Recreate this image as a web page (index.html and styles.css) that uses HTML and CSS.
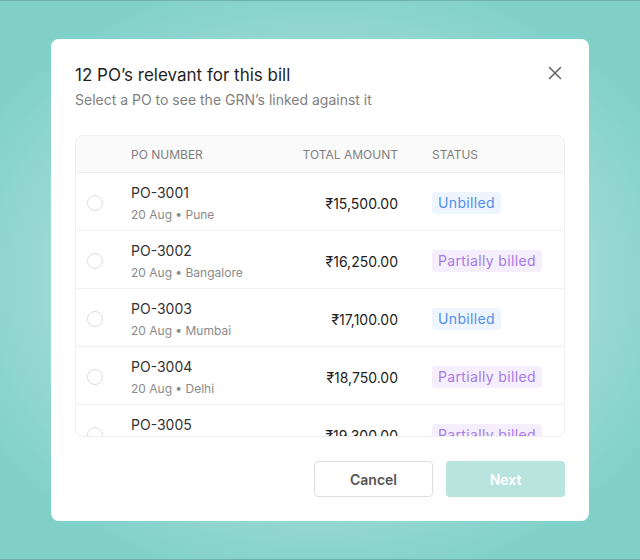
FILE: index.html
```html
<!DOCTYPE html>
<html>
<head>
<meta charset="utf-8">
<link rel="stylesheet" href="styles.css">
</head>
<body>
<div class="backdrop">
  <div class="modal">
    <div class="head">
      <div>
        <div class="title">12 PO’s relevant for this bill</div>
        <div class="subtitle">Select a PO to see the GRN’s linked against it</div>
      </div>
      <svg class="close" width="14" height="14" viewBox="0 0 14 14"><path d="M1.5 1.5 L12.5 12.5 M12.5 1.5 L1.5 12.5" stroke="#666" stroke-width="1.6" stroke-linecap="round" fill="none"/></svg>
    </div>
    <div class="card">
      <div class="row header">
        <div></div>
        <div>PO NUMBER</div>
        <div class="amt">TOTAL AMOUNT</div>
        <div></div>
        <div>STATUS</div>
      </div>
      <div class="row">
        <div class="radio-cell"><span class="radio"></span></div>
        <div class="po"><div class="num">PO-3001</div><div class="meta">20 Aug • Pune</div></div>
        <div class="amt val">₹15,500.00</div>
        <div></div>
        <div><span class="badge blue">Unbilled</span></div>
      </div>
      <div class="row">
        <div class="radio-cell"><span class="radio"></span></div>
        <div class="po"><div class="num">PO-3002</div><div class="meta">20 Aug • Bangalore</div></div>
        <div class="amt val">₹16,250.00</div>
        <div></div>
        <div><span class="badge purple">Partially billed</span></div>
      </div>
      <div class="row">
        <div class="radio-cell"><span class="radio"></span></div>
        <div class="po"><div class="num">PO-3003</div><div class="meta">20 Aug • Mumbai</div></div>
        <div class="amt val">₹17,100.00</div>
        <div></div>
        <div><span class="badge blue">Unbilled</span></div>
      </div>
      <div class="row">
        <div class="radio-cell"><span class="radio"></span></div>
        <div class="po"><div class="num">PO-3004</div><div class="meta">20 Aug • Delhi</div></div>
        <div class="amt val">₹18,750.00</div>
        <div></div>
        <div><span class="badge purple">Partially billed</span></div>
      </div>
      <div class="row">
        <div class="radio-cell"><span class="radio"></span></div>
        <div class="po"><div class="num">PO-3005</div><div class="meta">20 Aug • Chennai</div></div>
        <div class="amt val">₹19,300.00</div>
        <div></div>
        <div><span class="badge purple">Partially billed</span></div>
      </div>
    </div>
    <div class="footer">
      <button class="btn cancel">Cancel</button>
      <button class="btn next">Next</button>
    </div>
  </div>
</div>
</body>
</html>
```
FILE: styles.css
```css
* { box-sizing: border-box; }
html, body { margin: 0; padding: 0; }
body {
  font-family: Inter, "Noto Sans", sans-serif;
  width: 640px;
  height: 560px;
  overflow: hidden;
}
.backdrop {
  width: 640px;
  height: 560px;
  border-top: 1px solid #6eb2ac;
  border-bottom: 1px solid #6eb2ac;
  background: radial-gradient(ellipse 60% 55% at 50% 50%, #c4ece7 0%, #a6dfd9 55%, #82d1c9 100%);
  padding-top: 38px;
}
.modal {
  width: 538px;
  height: 482px;
  margin: 0 auto;
  background: #fff;
  border-radius: 8px;
  padding: 24px;
  display: flex;
  flex-direction: column;
}
.head {
  display: flex;
  justify-content: space-between;
  align-items: flex-start;
}
.title {
  font-size: 17px;
  line-height: 24px;
  color: #1f1f1f;
}
.subtitle {
  margin-top: 3px;
  font-size: 14px;
  line-height: 20px;
  color: #7f7f7f;
}
.close {
  margin-top: 3px;
  margin-right: 3px;
}
.card {
  margin-top: 25px;
  height: 302px;
  border: 1px solid #f0f0f0;
  border-radius: 8px;
  overflow: hidden;
}
.row {
  display: grid;
  grid-template-columns: 55px 147px 120px 34px 1fr;
  align-items: center;
  height: 58px;
  padding-top: 3px;
  border-bottom: 1px solid #f0f0f0;
}
.row.header {
  height: 37px;
  padding-top: 0;
  background: #fafafa;
  font-size: 12px;
  color: #808080;
}
.amt { text-align: right; }
.radio-cell { padding-left: 11px; display: flex; }
.radio {
  width: 16px;
  height: 16px;
  border: 1px solid #dcdcdc;
  border-radius: 50%;
  display: block;
}
.po { display: flex; flex-direction: column; gap: 3px; }
.num { font-size: 14px; line-height: 20px; color: #333; }
.meta { font-size: 12px; line-height: 18px; color: #8a8a8a; }
.val { font-size: 14px; color: #222; }
.badge {
  display: inline-block;
  height: 22px;
  line-height: 22px;
  padding: 0 6px;
  border-radius: 4px;
  font-size: 14px;
  letter-spacing: 0.35px;
}
.badge.blue { background: #eef5fe; color: #5190ea; }
.badge.purple { background: #f5effd; color: #a57be8; }
.footer {
  margin-top: 24px;
  display: flex;
  justify-content: flex-end;
  gap: 13px;
}
.btn {
  width: 119px;
  height: 36px;
  border-radius: 4px;
  font-family: Inter, "Noto Sans", sans-serif;
  font-size: 14px;
  font-weight: 600;
}
.cancel {
  background: #fff;
  border: 1px solid #dedede;
  color: #555;
}
.next {
  background: #b9e4de;
  border: none;
  color: #fff;
}
```
